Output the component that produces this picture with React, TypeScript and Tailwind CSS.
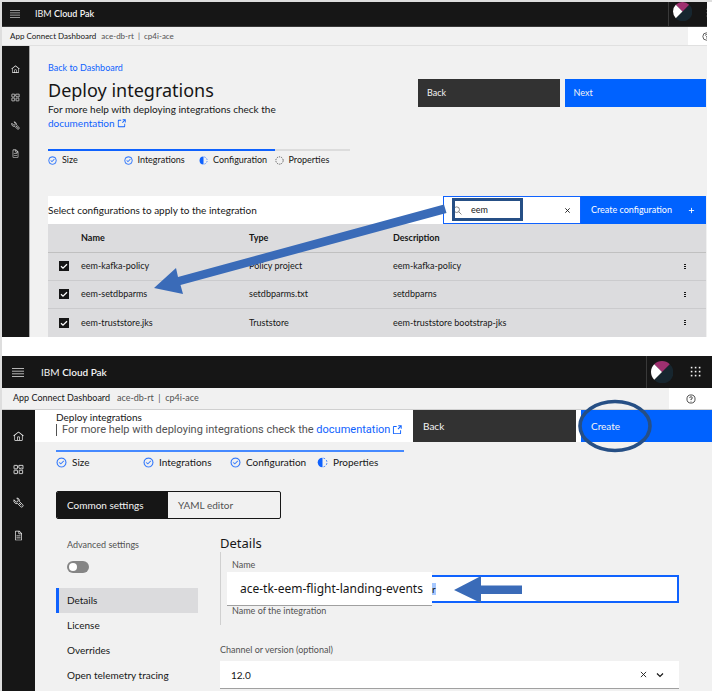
import type { ReactNode } from "react";

const CHECK_PATH =
  "M16 2a14 14 0 1 0 14 14A14 14 0 0 0 16 2Zm0 26a12 12 0 1 1 12-12 12 12 0 0 1-12 12ZM14 21.4l-5-5L10.4 15l3.6 3.6L21.6 11l1.4 1.4Z";

function HomeIcon({ className }: { className: string }) {
  return (
    <svg viewBox="0 0 32 32" fill="currentColor" className={className} aria-hidden="true">
      <path d="M16.61 2.21a1.01 1.01 0 0 0-1.24 0L1 13.42l1.24 1.57L4 13.62V26a2 2 0 0 0 2 2h20a2 2 0 0 0 2-2V13.63L29.76 15 31 13.43ZM18 26h-4v-8h4Zm2 0v-8a2 2 0 0 0-2-2h-4a2 2 0 0 0-2 2v8H6V12.06l10-7.79 10 7.8V26Z" />
    </svg>
  );
}

function CatalogIcon({ className }: { className: string }) {
  return (
    <svg viewBox="0 0 32 32" fill="none" stroke="currentColor" strokeWidth="2.4" className={className} aria-hidden="true">
      <rect x="3" y="4" width="10" height="10" rx="1" />
      <rect x="3" y="18" width="10" height="10" rx="1" />
      <rect x="18" y="18" width="10" height="10" rx="1" />
      <path d="M17 4h12v10h-5M17 4v7l4 3 3-4" />
    </svg>
  );
}

function ToolIcon({ className }: { className: string }) {
  return (
    <svg viewBox="0 0 32 32" fill="none" stroke="currentColor" strokeWidth="2.4" className={className} aria-hidden="true">
      <path d="M11 3l4 5v4l-4 3-5-3-3-4a8.500 8.500 0 0 0 10.500 11L22 28a4 4 0 0 0 6-6L19 13.500A8.500 8.500 0 0 0 11 3Z" />
      <path d="M17 17l7 7" />
    </svg>
  );
}

function DocIcon({ className }: { className: string }) {
  return (
    <svg viewBox="0 0 32 32" fill="currentColor" className={className} aria-hidden="true">
      <path d="M25.7 9.300l-7-7A1 1 0 0 0 18 2H8a2 2 0 0 0-2 2v24a2 2 0 0 0 2 2h16a2 2 0 0 0 2-2V10a1 1 0 0 0-.3-.7ZM18 4.400l5.600 5.600H18ZM24 28H8V4h8v6a2 2 0 0 0 2 2h6Z" />
      <path d="M10 22h12v2H10zM10 16h12v2H10z" />
    </svg>
  );
}

function LaunchIcon({ className }: { className: string }) {
  return (
    <svg viewBox="0 0 32 32" fill="currentColor" className={className} aria-hidden="true">
      <path d="M26 29H6a3 3 0 0 1-3-3V6a3 3 0 0 1 3-3h9v3H6v20h20v-9h3v9a3 3 0 0 1-3 3Z" />
      <path d="M20 1v3h5.600L18 11.600l2.400 2.400L28 6.400V12h3V1Z" />
    </svg>
  );
}

function HelpIcon({ className }: { className: string }) {
  return (
    <svg viewBox="0 0 32 32" fill="none" stroke="currentColor" strokeWidth="2.4" className={className} aria-hidden="true">
      <circle cx="16" cy="16" r="13" />
      <path d="M12 13v-1a3 3 0 0 1 3-3h2a3 3 0 0 1 3 3v1a3 3 0 0 1-3 3h-1v3.500" />
      <circle cx="16" cy="23.500" r="1.400" fill="currentColor" stroke="none" />
    </svg>
  );
}

function Avatar({ className }: { className: string }) {
  return (
    <svg viewBox="0 0 32 32" className={className} aria-hidden="true">
      <path d="M27.300 4.700A16 16 0 1 1 4.700 27.300Z" fill="#17262f" />
      <path d="M16 16L27.300 4.700A16 16 0 0 0 4.700 4.700Z" fill="#9f3070" />
      <path d="M16 16L4.700 4.700A16 16 0 0 0 4.700 27.300Z" fill="#ffffff" />
    </svg>
  );
}

function MenuIcon({ className }: { className: string }) {
  return (
    <svg viewBox="0 0 12 9" className={className} preserveAspectRatio="none" aria-hidden="true">
      <path d="M0 .5h12M0 3.200h12M0 5.800h12M0 8.500h12" stroke="#b5b5b5" strokeWidth="1" />
    </svg>
  );
}

function SwitcherIcon({ className }: { className: string }) {
  return (
    <svg viewBox="0 0 12 12" fill="currentColor" className={className} aria-hidden="true">
      {[0, 4, 8].map((y) =>
        [0, 4, 8].map((x) => <rect key={`${x}-${y}`} x={x + 0.8} y={y + 0.8} width="1.6" height="1.6" />),
      )}
    </svg>
  );
}

type StepState = "done" | "current" | "todo";

function StepIcon({ state, className }: { state: StepState; className: string }) {
  return (
    <svg viewBox="0 0 32 32" className={className} aria-hidden="true">
      {state === "done" && <path d={CHECK_PATH} fill="#0f62fe" stroke="#0f62fe" strokeWidth=".6" />}
      {state === "current" && (
        <>
          <path d="M16 2a14 14 0 0 0 0 28Z" fill="#0f62fe" />
          <path d="M16 3a13 13 0 0 1 0 26" fill="none" stroke="#0f62fe" strokeWidth="2.400" strokeDasharray="5 4.500" strokeDashoffset="-3" />
        </>
      )}
      {state === "todo" && (
        <circle cx="16" cy="16" r="13" fill="none" stroke="#161616" strokeWidth="2.200" strokeDasharray="4.800 3.400" />
      )}
    </svg>
  );
}

function DocLink({ iconClass }: { iconClass: string }) {
  return (
    <a href="#documentation" className="inline-flex items-center gap-0.5 text-[#0f62fe]">
      documentation
      <LaunchIcon className={iconClass} />
    </a>
  );
}

function Rail({ className, iconClass }: { className: string; iconClass: string }) {
  const items: { label: string; icon: ReactNode }[] = [
    { label: "Home", icon: <HomeIcon className={iconClass} /> },
    { label: "Catalog", icon: <CatalogIcon className={iconClass} /> },
    { label: "Tools", icon: <ToolIcon className={iconClass} /> },
    { label: "Documents", icon: <DocIcon className={iconClass} /> },
  ];
  return (
    <nav className={`flex shrink-0 flex-col items-center bg-[#161616] text-[#f4f4f4] ${className}`}>
      {items.map((item) => (
        <button key={item.label} type="button" aria-label={item.label}>
          {item.icon}
        </button>
      ))}
    </nav>
  );
}

function Kebab() {
  return (
    <button type="button" aria-label="Row options" className="flex flex-col gap-px align-middle">
      <span className="h-px w-0.5 bg-[#161616]" />
      <span className="h-px w-0.5 bg-[#161616]" />
      <span className="h-px w-0.5 bg-[#161616]" />
    </button>
  );
}

function RowCheckbox({ name }: { name: string }) {
  return (
    <span className="grid size-2.5 place-items-center">
      <input
        type="checkbox"
        defaultChecked
        aria-label={`Select ${name}`}
        className="col-start-1 row-start-1 size-2.5 appearance-none bg-[#161616]"
      />
      <svg viewBox="0 0 10 10" className="pointer-events-none col-start-1 row-start-1 size-2.5" aria-hidden="true">
        <path d="M2 5.200l2 2 4-4" fill="none" stroke="#ffffff" strokeWidth="1.300" />
      </svg>
    </span>
  );
}

const rows = [
  { name: "eem-kafka-policy", type: "Policy project", description: "eem-kafka-policy" },
  { name: "eem-setdbparms", type: "setdbparms.txt", description: "setdbparns" },
  { name: "eem-truststore.jks", type: "Truststore", description: "eem-truststore bootstrap-jks" },
];

const configSteps: { label: string; state: StepState }[] = [
  { label: "Size", state: "done" },
  { label: "Integrations", state: "done" },
  { label: "Configuration", state: "current" },
  { label: "Properties", state: "todo" },
];

const propertySteps: { label: string; state: StepState }[] = [
  { label: "Size", state: "done" },
  { label: "Integrations", state: "done" },
  { label: "Configuration", state: "done" },
  { label: "Properties", state: "current" },
];

function ConfigurationScreen() {
  return (
    <section className="relative mr-[5px] overflow-hidden bg-[#f1f1f1] text-[9px] leading-[14px]">
      <header className="flex h-[25px] items-stretch border-b border-[#393939] bg-[#161616] text-[#f4f4f4]">
        <button type="button" aria-label="Menu" className="ml-2 flex items-center">
          <MenuIcon className="h-2 w-2.5" />
        </button>
        <p className="ml-[15px] self-center text-[9px] leading-5">
          IBM <strong className="font-semibold">Cloud Pak</strong>
        </p>
        <div className="ml-auto flex w-[39px] justify-between overflow-hidden border-l border-[#393939] pl-1">
          <Avatar className="size-[19px] shrink-0" />
          <SwitcherIcon className="mt-1.5 -mr-[9px] size-[10px] shrink-0 text-[#8d8d8d]" />
        </div>
      </header>
      <div className="flex h-[19px] items-stretch border-b border-[#e0e0e0] pl-2 text-[8px] leading-[18px]">
        <span className="text-[#161616]">App Connect Dashboard</span>
        <span className="ml-[5px] text-[#525252]">ace-db-rt &nbsp;|&nbsp; cp4i-ace</span>
        <button type="button" aria-label="Help" className="ml-auto flex w-[19px] items-center overflow-hidden bg-white pl-3.5">
          <HelpIcon className="size-[9px] shrink-0" />
        </button>
      </div>
      <div className="flex">
        <Rail className="w-7 gap-[19px] border-r border-[#a8a8a8] pt-[19px]" iconClass="size-[9px]" />
        <main className="min-w-0 flex-1 pt-[15px] pr-px pl-[18px]">
          <div className="flex items-start justify-between">
            <div className="w-[250px]">
              <a href="#dashboard" className="block leading-[14px] text-[#0f62fe]">
                Back to Dashboard
              </a>
              <h1 className="mt-1 font-['Noto_Sans',sans-serif] text-[18px] leading-[23px]">Deploy integrations</h1>
              <p className="text-[10px]">
                For more help with deploying integrations check the <DocLink iconClass="size-[9px]" />
              </p>
            </div>
            <div className="mt-[18px] flex w-[288px] gap-[5px] text-[#f4f4f4]">
              <button type="button" className="h-7 flex-1 bg-[#323232] px-[9px] text-left">
                Back
              </button>
              <button type="button" className="h-7 flex-1 bg-[#0062ff] px-[9px] text-left">
                Next
              </button>
            </div>
          </div>
          <ol className="mt-[19px] flex w-[302px]">
            {configSteps.map((step) => (
              <li
                key={step.label}
                className={`flex flex-1 basis-0 items-center gap-[5px] border-t-2 pt-0.5 ${step.state === "todo" ? "border-[#dcdcdc]" : "border-[#0f62fe]"}`}
              >
                <StepIcon state={step.state} className="size-[9px] shrink-0" />
                {step.label}
              </li>
            ))}
          </ol>
          <div className="mt-[29px] flex h-7 items-stretch bg-white">
            <h2 className="flex-1 self-center text-[10px]">Select configurations to apply to the integration</h2>
            <div className="flex w-[138px] items-center border border-[#0f62fe] bg-white text-[#161616]">
              <svg viewBox="0 0 16 16" className="ml-[9px] size-[9px]" fill="none" stroke="#6f6f6f" strokeWidth="1.500" aria-hidden="true">
                <circle cx="6.500" cy="6.500" r="5" />
                <path d="M10 10l5 5" />
              </svg>
              <input
                type="text"
                defaultValue="eem"
                aria-label="Search configurations"
                className="ml-[9px] w-[93px] outline-none"
              />
              <button type="button" aria-label="Clear search">
                <svg viewBox="0 0 8 8" className="size-[7px]" fill="none" stroke="#161616" aria-hidden="true">
                  <path d="M1.500 1.500l5 5M6.500 1.500l-5 5" />
                </svg>
              </button>
            </div>
            <button type="button" className="flex w-[125px] items-center justify-between bg-[#0062ff] pr-[11px] pl-2.5 text-white">
              Create configuration
              <svg viewBox="0 0 8 8" className="size-[7px]" fill="none" stroke="#ffffff" aria-hidden="true">
                <path d="M4 1v6M1 4h6" />
              </svg>
            </button>
          </div>
          <table className="w-full table-fixed border-collapse bg-[#dcdcde] text-left">
            <thead>
              <tr className="h-7 border-b border-[#c0c0c0]">
                <th className="w-[33px]" aria-label="Selection" />
                <th className="w-[168px] font-bold">Name</th>
                <th className="w-[144px] font-bold">Type</th>
                <th className="font-bold">Description</th>
                <th className="w-[22px]" aria-label="Options" />
              </tr>
            </thead>
            <tbody>
              {rows.map((row) => (
                <tr key={row.name} className="h-7 border-b border-[#cbcbcd] last:h-[29px] last:border-b-0">
                  <td className="pl-[11px]">
                    <RowCheckbox name={row.name} />
                  </td>
                  <td>{row.name}</td>
                  <td>{row.type}</td>
                  <td>{row.description}</td>
                  <td>
                    <Kebab />
                  </td>
                </tr>
              ))}
            </tbody>
          </table>
        </main>
      </div>
      <div className="pointer-events-none absolute top-[196px] right-[184px] h-[23px] w-[71px] border-3 border-[#264f85]" />
      <svg viewBox="0 0 294 91" className="pointer-events-none absolute top-[202px] right-[260px] h-[91px] w-[294px]" aria-hidden="true">
        <polygon points="1,84 23,64 25,73 291,0.500 293.500,9 27.500,81 30,90" fill="#3a6bb8" />
      </svg>
    </section>
  );
}

function PropertiesScreen() {
  const sections = ["Details", "License", "Overrides", "Open telemetry tracing"];
  return (
    <section className="mt-[19px] bg-[#f1f1f1] text-[10px] leading-4">
      <header className="flex h-8 items-stretch bg-[#161616] text-[#f4f4f4]">
        <button type="button" aria-label="Menu" className="ml-2.5 flex items-center">
          <MenuIcon className="h-[9px] w-3" />
        </button>
        <p className="ml-[17px] self-center leading-5">
          IBM <strong className="font-semibold">Cloud Pak</strong>
        </p>
        <div className="ml-auto flex w-[66px] items-center justify-between border-l border-[#393939] pr-2.5 pl-1">
          <Avatar className="size-[22px]" />
          <button type="button" aria-label="App switcher">
            <SwitcherIcon className="size-3" />
          </button>
        </div>
      </header>
      <div className="flex h-[22px] items-stretch border-b border-[#d0d0d0] pl-[11px] text-[9px] leading-5">
        <span>App Connect Dashboard</span>
        <span className="ml-[7px] text-[#525252]">ace-db-rt &nbsp;|&nbsp; cp4i-ace</span>
        <button type="button" aria-label="Help" className="ml-auto flex w-[43px] items-center justify-center bg-white">
          <HelpIcon className="size-2.5" />
        </button>
      </div>
      <div className="flex">
        <Rail className="w-[33px] gap-[22px] pt-[21px]" iconClass="size-[11px]" />
        <main className="min-w-0 flex-1">
          <div className="flex h-8 items-stretch bg-white">
            <div className="min-w-0 flex-1 pl-[21px]">
              <h2 className="leading-[14px]">Deploy integrations</h2>
              <p className="flex items-center font-[Roboto,sans-serif] text-[11px] leading-3 whitespace-nowrap">
                <span className="mr-[5px] h-3 w-px bg-[#525252]" />
                <span className="text-[#525252]">For more help with deploying integrations check the&nbsp;</span>
                <DocLink iconClass="size-2.5" />
              </p>
            </div>
            <div className="flex w-[299px] shrink-0 gap-[5px] text-[#f4f4f4]">
              <button type="button" className="w-[163px] bg-[#323232] px-2.5 text-left">
                Back
              </button>
              <div className="relative flex flex-1">
                <button type="button" className="flex-1 bg-[#0062ff] px-2.5 text-left">
                  Create
                </button>
                <svg viewBox="0 0 74 54" className="pointer-events-none absolute -top-[11px] -left-[3px] h-[54px] w-[74px]" aria-hidden="true">
                  <ellipse cx="37" cy="27" rx="35" ry="24.500" fill="none" stroke="#264f85" strokeWidth="3.600" />
                </svg>
              </div>
            </div>
          </div>
          <ol className="mt-2 ml-[21px] flex">
            {propertySteps.map((step) => (
              <li key={step.label} className="flex w-[87px] items-center gap-[5px] border-t-2 border-[#4589ff] pt-0.5">
                <StepIcon state={step.state} className="size-[11px] shrink-0" />
                {step.label}
              </li>
            ))}
          </ol>
          <div className="mt-[21px] ml-[21px] flex h-7 w-[225px] overflow-hidden rounded-xs border border-[#161616]">
            <button type="button" className="w-[111px] bg-[#161616] px-2.5 text-left text-[#f4f4f4]">
              Common settings
            </button>
            <button type="button" className="flex-1 px-2.5 text-left text-[#525252]">
              YAML editor
            </button>
          </div>
          <div className="flex pr-[33px] pl-[21px]">
            <aside className="w-[142px] pt-[18px]">
              <label htmlFor="advanced" className="block pl-[11px] text-[9px] text-[#525252]">
                Advanced settings
              </label>
              <span className="mt-2 ml-[11px] flex h-3 w-[22px] items-center rounded-full bg-[#858585] pl-0.5">
                <input id="advanced" type="checkbox" role="switch" className="size-2 appearance-none rounded-full bg-white" />
              </span>
              <nav className="mt-[15px]">
                {sections.map((label, index) => (
                  <a
                    key={label}
                    href="#section"
                    className={`block h-[25px] border-l-3 pl-2 leading-[25px] ${index === 0 ? "border-[#0f62fe] bg-[#dbdbdd]" : "border-transparent"}`}
                  >
                    {label}
                  </a>
                ))}
              </nav>
            </aside>
            <div className="ml-[22px] flex-1 pt-[15px]">
              <h2 className="font-['Noto_Sans',sans-serif] text-[13px] leading-[18px]">Details</h2>
              <div className="relative h-[73px] border-l border-[#d0d0d0] pt-[5px] pl-[11px]">
                <label htmlFor="name" className="block text-[9px] text-[#525252]">
                  Name
                </label>
                <div className="relative mt-0.5 h-7 bg-white">
                  <span className="absolute top-2 left-[200px] h-3 w-1 bg-[#a6c8ff]" />
                  <input
                    id="name"
                    type="text"
                    defaultValue="r"
                    className="relative h-7 w-full border-2 border-[#0f62fe] pl-[198px] outline-none"
                  />
                  <svg viewBox="0 0 68 28" className="pointer-events-none absolute top-0 left-[222px] h-7 w-[68px]" aria-hidden="true">
                    <polygon points="0,15 27,1 27,10.500 68,10.500 68,19 27,19 27,28" fill="#3a6bb8" />
                  </svg>
                </div>
                <p className="text-[9px] text-[#525252]">Name of the integration</p>
                <div className="absolute top-5 left-1.5 h-[34px] w-[205px] border-b border-[#a0a0a0] bg-white pl-[13px] font-['Noto_Sans',sans-serif] text-[12px] leading-[33px] whitespace-nowrap">
                  ace-tk-eem-flight-landing-events
                </div>
              </div>
              <label htmlFor="channel" className="mt-[17px] block text-[9px] text-[#525252]">
                Channel or version (optional)
              </label>
              <div className="mt-[3px] flex h-7 items-center border-b border-[#a0a0a0] bg-white pr-[15px]">
                <select id="channel" className="h-full flex-1 appearance-none pl-[11px] text-[10px] outline-none">
                  <option>12.0</option>
                </select>
                <button type="button" aria-label="Clear selection">
                  <svg viewBox="0 0 8 8" className="size-[7px]" fill="none" stroke="#161616" aria-hidden="true">
                    <path d="M1 1l6 6M7 1l-6 6" />
                  </svg>
                </button>
                <svg viewBox="0 0 8 8" className="ml-[9px] size-2" fill="none" stroke="#161616" strokeWidth="1.200" aria-hidden="true">
                  <path d="M1 2.500l3 3 3-3" />
                </svg>
              </div>
              <div className="h-0.5" />
            </div>
          </div>
        </main>
      </div>
    </section>
  );
}

export default function App() {
  return (
    <div className="border-t-2 border-l-2 border-[#dedede] bg-white font-[Lato,'Noto_Sans',sans-serif] text-[#161616]">
      <ConfigurationScreen />
      <PropertiesScreen />
    </div>
  );
}
